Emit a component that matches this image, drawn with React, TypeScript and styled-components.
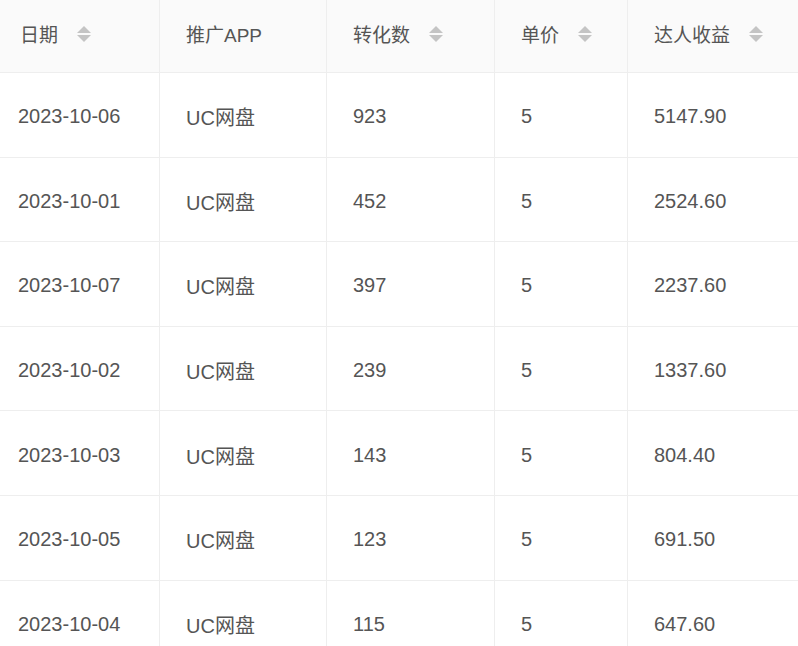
import React from "react";
import styled, { createGlobalStyle } from "styled-components";

const Global = createGlobalStyle`
  html, body { margin: 0; padding: 0; background: #ffffff; }
  body { font-family: "Liberation Sans", Arial, "Noto Sans CJK SC", sans-serif; }
`;

const Table = styled.div`
  display: grid;
  grid-template-columns: 160px 167px 168px 133px 170px;
  width: 798px;
  height: 646px;
  overflow: hidden;
`;

const HeadCell = styled.div<{ $first?: boolean; $last?: boolean }>`
  height: 73px;
  box-sizing: border-box;
  display: flex;
  align-items: center;
  gap: 18px;
  padding-bottom: 5px;
  padding-left: ${(p) => (p.$first ? "20px" : "26px")};
  background: #fafafa;
  color: #555555;
  font-size: 19px;
  font-family: "Liberation Sans", Arial, "Noto Sans CJK SC", sans-serif;
  border-bottom: 1px solid #eeeeee;
  border-right: ${(p) => (p.$last ? "none" : "1px solid #eeeeee")};
`;

const Cell = styled.div<{ $first?: boolean; $last?: boolean }>`
  height: 84.6px;
  display: flex;
  align-items: center;
  padding-top: 4px;
  box-sizing: border-box;
  padding-left: ${(p) => (p.$first ? "18px" : "26px")};
  color: #555555;
  font-size: 20px;
  font-family: "Liberation Sans", Arial, "Noto Sans CJK SC", sans-serif;
  border-bottom: 1px solid #eeeeee;
  border-right: ${(p) => (p.$last ? "none" : "1px solid #eeeeee")};
`;

const SortIcon = styled.svg`
  width: 16px;
  height: 18px;
  flex: none;
`;

const Sorter = () => (
  <SortIcon viewBox="0 0 16 18">
    <path d="M8 1 L15 8 L1 8 Z" fill="#c4c4c4" />
    <path d="M8 17 L15 10 L1 10 Z" fill="#c4c4c4" />
  </SortIcon>
);

const columns = [
  { title: "日期", sort: true },
  { title: "推广APP", sort: false },
  { title: "转化数", sort: true },
  { title: "单价", sort: true },
  { title: "达人收益", sort: true },
];

const rows = [
  ["2023-10-06", "UC网盘", "923", "5", "5147.90"],
  ["2023-10-01", "UC网盘", "452", "5", "2524.60"],
  ["2023-10-07", "UC网盘", "397", "5", "2237.60"],
  ["2023-10-02", "UC网盘", "239", "5", "1337.60"],
  ["2023-10-03", "UC网盘", "143", "5", "804.40"],
  ["2023-10-05", "UC网盘", "123", "5", "691.50"],
  ["2023-10-04", "UC网盘", "115", "5", "647.60"],
];

export default function App() {
  return (
    <>
      <Global />
      <Table>
        {columns.map((c, i) => (
          <HeadCell key={c.title} $first={i === 0} $last={i === columns.length - 1}>
            <span>{c.title}</span>
            {c.sort && <Sorter />}
          </HeadCell>
        ))}
        {rows.map((r, ri) =>
          r.map((v, ci) => (
            <Cell key={`${ri}-${ci}`} $first={ci === 0} $last={ci === r.length - 1}>
              {v}
            </Cell>
          ))
        )}
      </Table>
    </>
  );
}
